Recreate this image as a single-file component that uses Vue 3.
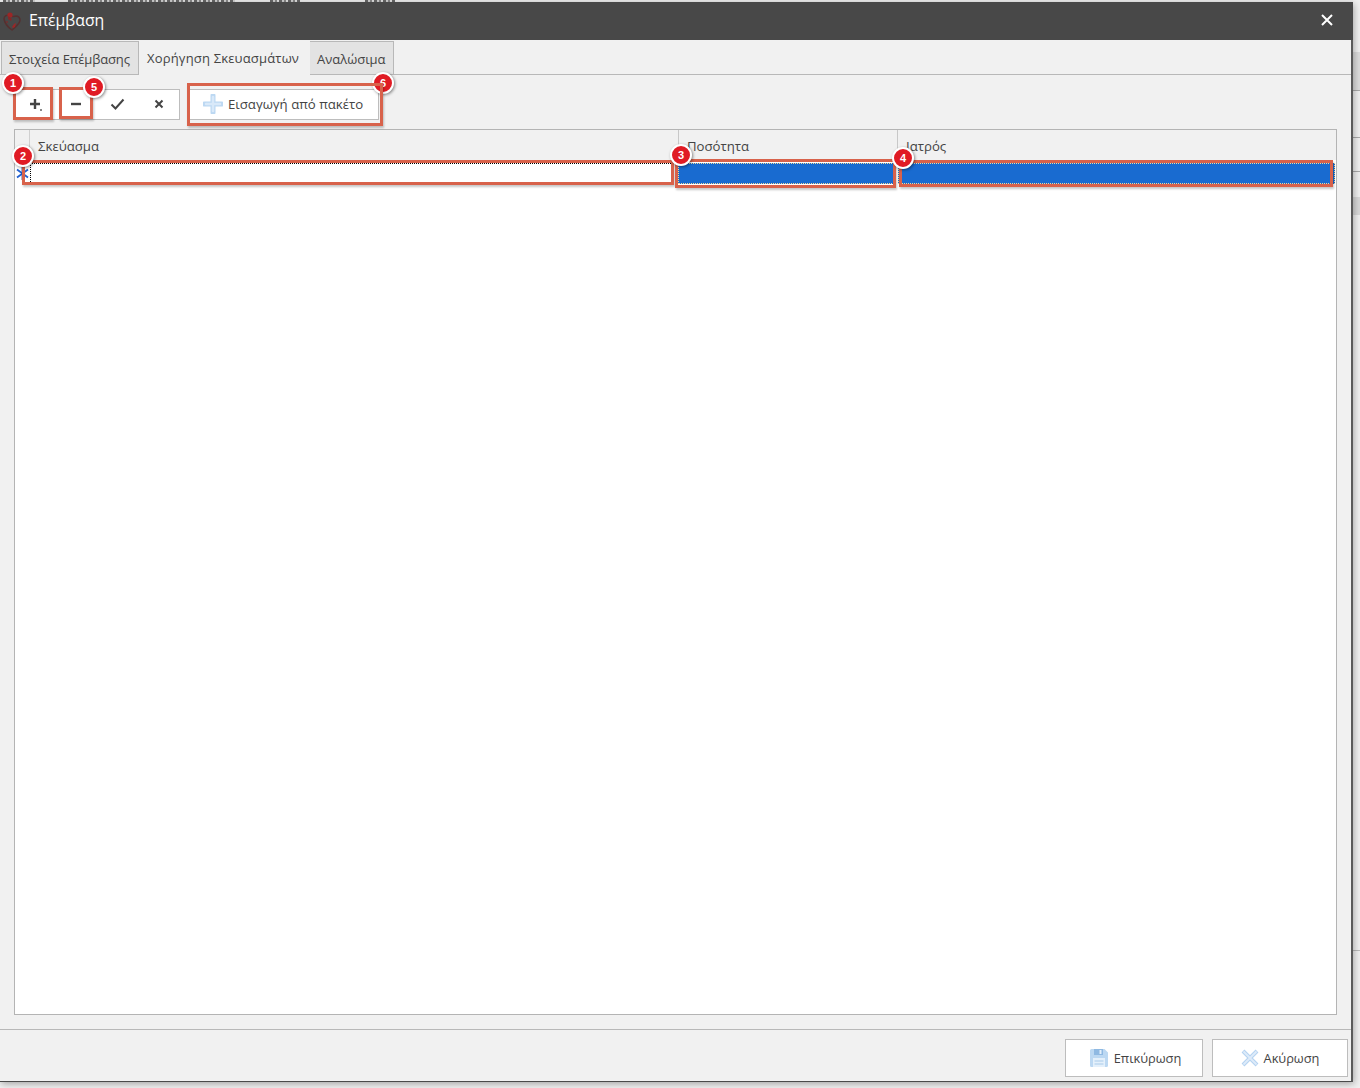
<script setup>
const columns = [
  { title: 'Σκεύασμα', width: 649 },
  { title: 'Ποσότητα', width: 219 },
  { title: 'Ιατρός', width: 436 }
]
const marks = [
  { n: 1, x: 13, y: 87, w: 40, h: 33, bx: 13, by: 83 },
  { n: 5, x: 59, y: 87, w: 34, h: 32, bx: 94, by: 87 },
  { n: 6, x: 187, y: 83, w: 196, h: 43, bx: 383, by: 83, over: true },
  { n: 2, x: 22, y: 160, w: 652, h: 25, bx: 23, by: 156 },
  { n: 3, x: 675, y: 159, w: 221, h: 29, bx: 681, by: 155 },
  { n: 4, x: 899, y: 160, w: 434, h: 27, bx: 903, by: 158 }
]
</script>

<template>
  <div class="page">
    <div class="behind-top">
      <i class="frag f1"></i><i class="frag f2"></i><i class="frag f3"></i><i class="frag f4"></i>
    </div>
    <div class="behind-right">
      <div class="strip s1"></div>
      <div class="strip s2"></div>
      <div class="strip s3"></div>
      <div class="strip s4"></div>
      <div class="strip s5"></div>
    </div>

    <section class="window">
      <header class="titlebar">
        <svg class="logo" width="20" height="20" viewBox="0 0 20 20">
          <path d="M2 8c0-3 3-5 6-3 3 1 5 0 7 0 3 1 4 4 2 7-2 3-5 5-7 7-3-2-7-6-8-11z" fill="none" stroke="#553030" stroke-width="1.500"/>
          <circle cx="8" cy="4" r="2.600" fill="#9c2626"/>
          <path d="M6 5l4 3-1 2-3-2z" fill="#832828"/>
          <path d="M10 16l2-3 2-1-1 4-2 1z" fill="#9c2626"/>
          <circle cx="5" cy="11" r="0.900" fill="#7c2c2c"/>
        </svg>
        <span class="title">Επέμβαση</span>
        <svg class="close" width="12" height="12" viewBox="0 0 12 12">
          <path d="M1 1l10 10M11 1L1 11" stroke="#fff" stroke-width="2"/>
        </svg>
      </header>

      <nav class="tabs">
        <div class="tab tab-a">Στοιχεία Επέμβασης</div>
        <div class="tab tab-b active">Χορήγηση Σκευασμάτων</div>
        <div class="tab tab-c">Αναλώσιμα</div>
      </nav>

      <main class="panel">
        <div class="toolbar">
          <div class="tool-group">
            <button class="tool t-add">
              <svg width="14" height="14" viewBox="0 0 14 14"><path d="M6 1v10M1 6h10" stroke="#444" stroke-width="2.400"/><rect x="11" y="11" width="2" height="2" fill="#888"/></svg>
            </button>
            <button class="tool t-del">
              <svg width="12" height="12" viewBox="0 0 12 12"><path d="M1 6h10" stroke="#444" stroke-width="2.400"/></svg>
            </button>
            <button class="tool t-ok">
              <svg width="15" height="12" viewBox="0 0 15 12"><path d="M1.500 6.500l4 4 8-9" fill="none" stroke="#444" stroke-width="2"/></svg>
            </button>
            <button class="tool t-no">
              <svg width="10" height="10" viewBox="0 0 10 10"><path d="M1.500 1.500l7 7M8.500 1.500l-7 7" stroke="#444" stroke-width="2"/></svg>
            </button>
          </div>
          <button class="import">
            <svg width="20" height="20" viewBox="0 0 20 20">
              <path d="M10 1.500v17M1.500 10h17" stroke="#bcd8f2" stroke-width="5" stroke-linecap="round"/>
              <path d="M10 3v14M3 10h14" stroke="#d9e9f9" stroke-width="2.500" stroke-linecap="round"/>
            </svg>
            <span>Εισαγωγή από πακέτο</span>
          </button>
        </div>

        <div class="grid">
          <div class="grid-head">
            <div class="indicator"></div>
            <div v-for="c in columns" :key="c.title" class="head-cell" :style="{ width: c.width + 'px' }">{{ c.title }}</div>
          </div>
          <div class="grid-row">
            <div class="row-ind">
              <svg width="13" height="13" viewBox="0 0 13 13">
                <path d="M1 2.500l11 8M12 2.500l-11 8" stroke="#1f5fd0" stroke-width="1.800"/>
                <path d="M6.500 0v13" stroke="#1a50b0" stroke-width="1.800"/>
              </svg>
            </div>
            <div class="cell cell-edit"></div>
            <div class="cell cell-blue c2"></div>
            <div class="cell cell-blue c3"></div>
          </div>
        </div>
      </main>

      <footer class="footer">
        <button class="action action-save">
          <svg width="20" height="20" viewBox="0 0 20 20">
            <path d="M1 2.500A1.500 1.500 0 0 1 2.500 1h13l3.500 3.500v13a1.500 1.500 0 0 1-1.500 1.500h-15A1.500 1.500 0 0 1 1 17.500z" fill="#bcd8f2"/>
            <rect x="5" y="1" width="9" height="6" fill="#8fb9e2"/>
            <rect x="10.500" y="2" width="2" height="4" fill="#e4f0fb"/>
            <rect x="4" y="10" width="12" height="9" fill="#e4f0fb"/>
            <path d="M5.500 13h9M5.500 16h9" stroke="#a7c9ea" stroke-width="1.200"/>
          </svg>
          <span>Επικύρωση</span>
        </button>
        <button class="action action-cancel">
          <svg width="18" height="18" viewBox="0 0 18 18">
            <path d="M2 2l14 14M16 2L2 16" stroke="#b4d2f0" stroke-width="4"/>
            <path d="M2.500 2.500l13 13M15.500 2.500l-13 13" stroke="#deebf9" stroke-width="1.800"/>
          </svg>
          <span>Ακύρωση</span>
        </button>
      </footer>
    </section>

    <div class="marks">
      <template v-for="m in marks" :key="m.n">
        <div class="badge" :style="{ left: m.bx - 11 + 'px', top: m.by - 11 + 'px' }">{{ m.n }}</div>
        <div class="mark" :class="{ over: m.over }" :style="{ left: m.x + 'px', top: m.y + 'px', width: m.w + 'px', height: m.h + 'px' }"></div>
      </template>
    </div>
  </div>
</template>

<style scoped>
.page {
  position: relative;
  width: 1360px;
  height: 1088px;
  overflow: hidden;
  background: #f2f2f2;
  font-family: "Open Sans", "Noto Sans", sans-serif;
  font-size: 13.2px;
  color: #444;
}
.behind-top {
  height: 2px;
  overflow: hidden;
  display: flex;
  background: #ececec;
}
.frag {
  display: block;
  height: 2px;
  background: repeating-linear-gradient(90deg, #666 0 3px, #cfcfcf 3px 5px, #888 5px 7px, #e0e0e0 7px 9px);
}
.f1 { width: 32px; margin-left: 3px; }
.f2 { width: 167px; margin-left: 33px; }
.f3 { width: 30px; margin-left: 35px; }
.f4 { width: 30px; margin-left: 65px; }

.behind-right {
  position: absolute;
  top: 0;
  right: 0;
  width: 7px;
  height: 1088px;
  background: #f0f0f0;
}
.strip { position: absolute; left: 0; right: 0; }
.s1 { top: 52px; height: 38px; background: #dcdcdc; border-bottom: 1px solid #aaa; }
.s2 { top: 137px; height: 1px; background: #aaa; }
.s3 { top: 171px; height: 1px; background: #aaa; }
.s4 { top: 197px; height: 18px; background: #d8d8d8; }
.s5 { top: 950px; height: 1px; background: #bbb; }

.window {
  position: relative;
  display: flex;
  flex-direction: column;
  width: 1353px;
  height: 1080px;
  box-sizing: border-box;
  background: #f1f1f1;
  border-right: 2px solid #5a5a5a;
  border-bottom: 1px solid #4a4a4a;
  box-shadow: 1px 2px 7px rgba(0, 0, 0, 0.32);
}
.titlebar {
  flex: none;
  display: flex;
  align-items: center;
  height: 38px;
  box-sizing: border-box;
  margin-right: -2px;
  background: #484848;
  color: #fff;
  padding: 0 20px 2px 2px;
}
.logo { flex: none; margin-right: 7px; margin-top: 2px; }
.title { font-size: 15.8px; }
.close { margin-left: auto; }

.tabs {
  flex: none;
  display: flex;
  height: 35px;
  padding: 1px 0 0 1px;
  box-sizing: border-box;
  margin-bottom: -1px;
  position: relative;
  z-index: 1;
}
.tab {
  flex: none;
  box-sizing: border-box;
  height: 34px;
  padding: 0 0 0 7px;
  font-size: 13px;
  line-height: 34px;
  background: #e3e3e3;
  border: 1px solid #b8b8b8;
  white-space: nowrap;
}
.tab-a { width: 138px; letter-spacing: -0.12px; }
.tab-b { width: 171px; letter-spacing: 0.18px; }
.tab-c { width: 84px; border-left: none; }
.tab.active {
  background: #f1f1f1;
  border: none;
  height: 35px;
  margin-top: -1px;
  padding-left: 8px;
  line-height: 36px;
}

.panel {
  flex: 1;
  min-height: 0;
  box-sizing: border-box;
  border-top: 1px solid #b8b8b8;
  padding: 14px;
  display: flex;
  flex-direction: column;
}
.toolbar { flex: none; display: flex; gap: 9px; height: 31px; margin-bottom: 9px; }
.tool-group {
  display: flex;
  width: 166px;
  box-sizing: border-box;
  padding-bottom: 1px;
  background: #fff;
  border: 1px solid #bdbdbd;
}
.tool {
  display: flex;
  align-items: center;
  justify-content: center;
  padding: 0;
  border: none;
  background: transparent;
}
.t-add { width: 41px; padding-top: 2px; }
.t-del { width: 40px; }
.t-ok { width: 42px; }
.t-no { width: 41px; }
.import {
  display: flex;
  align-items: center;
  gap: 5px;
  width: 190px;
  box-sizing: border-box;
  padding: 0 0 2px 13px;
  background: #fff;
  border: 1px solid #bdbdbd;
  font: inherit;
  color: #444;
}
.grid {
  flex: 1;
  min-height: 0;
  width: 1323px;
  box-sizing: border-box;
  background: #fff;
  border: 1px solid #b4b4b4;
}
.grid-head {
  display: flex;
  height: 30px;
  background: #f1f1f1;
}
.indicator {
  flex: none;
  width: 15px;
  box-sizing: border-box;
  border-right: 1px solid #d0d0d0;
}
.head-cell {
  flex: none;
  box-sizing: border-box;
  padding: 7px 0 0 8px;
  border-right: 1px solid #c8c8c8;
  white-space: nowrap;
}
.head-cell:last-child { border-right: none; }
.grid-row { display: flex; height: 25px; padding-top: 3px; box-sizing: border-box; }
.row-ind {
  flex: none;
  display: flex;
  align-items: center;
  justify-content: center;
  width: 15px;
  height: 21px;
}
.cell { flex: none; box-sizing: border-box; height: 21px; }
.cell-edit { width: 643px; margin-right: 5px; border: 1px dotted #000; background: #fff; }
.cell-blue { background: #196bd0; border: 1px dotted #f2d79a; }
.c2 { width: 216px; margin-right: 4px; }
.c3 { width: 437px; }

.footer {
  flex: none;
  display: flex;
  justify-content: flex-end;
  gap: 9px;
  height: 52px;
  box-sizing: border-box;
  border-top: 1px solid #b8b8b8;
  padding: 9px 3px 0 0;
}
.action {
  display: flex;
  align-items: center;
  justify-content: center;
  gap: 5px;
  width: 138px;
  height: 38px;
  box-sizing: border-box;
  padding: 0;
  background: #fff;
  border: 1px solid #bdbdbd;
  font: inherit;
  font-size: 12.8px;
  color: #444;
}
.action-save { padding-left: 2px; }
.action-cancel { width: 136px; }

.marks { position: absolute; inset: 0; pointer-events: none; }
.mark {
  position: absolute;
  z-index: 0;
  box-sizing: border-box;
  border: 3px solid #d8624b;
  box-shadow: 1px 2px 2px rgba(0, 0, 0, 0.22);
}
.mark.over { z-index: 2; }
.badge {
  position: absolute;
  z-index: 1;
  width: 22px;
  height: 22px;
  box-sizing: border-box;
  border-radius: 50%;
  background: #e01b24;
  border: 2px solid #fff;
  box-shadow: 1px 1px 3px rgba(0, 0, 0, 0.45);
  color: #fff;
  font-family: "Liberation Sans", sans-serif;
  font-size: 11px;
  font-weight: 700;
  line-height: 18px;
  text-align: center;
}
</style>
